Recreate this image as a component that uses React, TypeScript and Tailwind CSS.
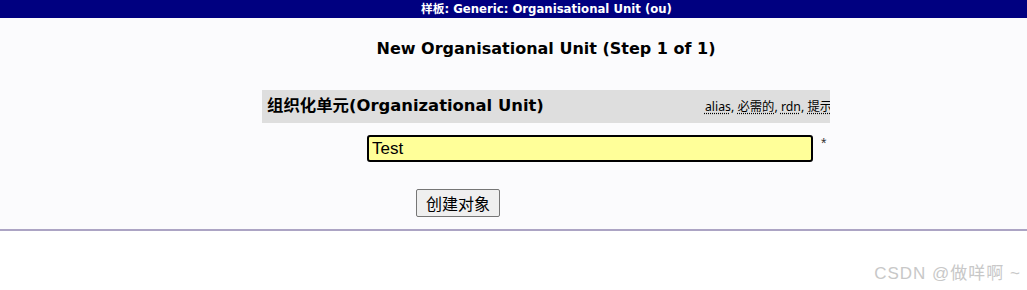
import React from 'react'

export default function App() {
  return (
    <div className="relative w-[1027px] h-[290px] bg-white overflow-hidden">
      <div className="h-[18px] bg-[#000080] text-white text-[11.7px] font-bold leading-[18px] text-center pl-[66px] font-['DejaVu_Sans','Noto_Sans_CJK_SC',sans-serif]">
        样板: Generic: Organisational Unit (ou)
      </div>

      <div className="h-[213px] bg-[#fbfbfd] border-b-2 border-[#aca4c4]">
        <div className="ml-[262px] w-[568px] pt-[20px] font-['DejaVu_Sans','Noto_Sans_CJK_SC',sans-serif]">
          <h1 className="text-center text-[16px] font-bold text-black leading-[22px]">
            New Organisational Unit (Step 1 of 1)
          </h1>

          <div className="mt-[30px] h-[33px] bg-[#dedede] flex items-center justify-between pl-[5px] overflow-hidden whitespace-nowrap">
            <span className="text-[16.4px] font-bold text-black">组织化单元(Organizational Unit)</span>
            <span className="text-[12.3px] text-black font-['Noto_Sans','Noto_Sans_CJK_SC',sans-serif] mt-[1px] mr-[-2px]">
              <span className="underline decoration-dotted underline-offset-2">alias</span>,{' '}
              <span className="underline decoration-dotted underline-offset-2">必需的</span>,{' '}
              <span className="underline decoration-dotted underline-offset-2">rdn</span>,{' '}
              <span className="underline decoration-dotted underline-offset-2">提示</span>
            </span>
          </div>

          <div className="mt-[12px] flex items-start">
            <input
              defaultValue="Test"
              className="ml-[105px] w-[446px] h-[27px] bg-[#ffff99] border-2 border-black rounded-[3px] px-[3px] text-[17px] text-black font-['Liberation_Sans',sans-serif] outline-none"
            />
            <span className="ml-[8px] mt-[-2px] text-[14px] text-[#333] font-['Liberation_Sans',sans-serif]">*</span>
          </div>

          <div className="mt-[27px] pl-[154px]">
            <button className="h-[28px] px-[9px] bg-[#efefef] border border-[#767676] rounded-[2px] text-[16px] text-black font-['Noto_Sans_CJK_SC',sans-serif] leading-none">
              创建对象
            </button>
          </div>
        </div>
      </div>

      <div className="absolute right-[6px] bottom-[4px] text-[17px] tracking-[1px] text-[#c8c8c8] font-['Liberation_Sans','Noto_Sans_CJK_SC',sans-serif]">
        CSDN @做咩啊 ~
      </div>
    </div>
  )
}
